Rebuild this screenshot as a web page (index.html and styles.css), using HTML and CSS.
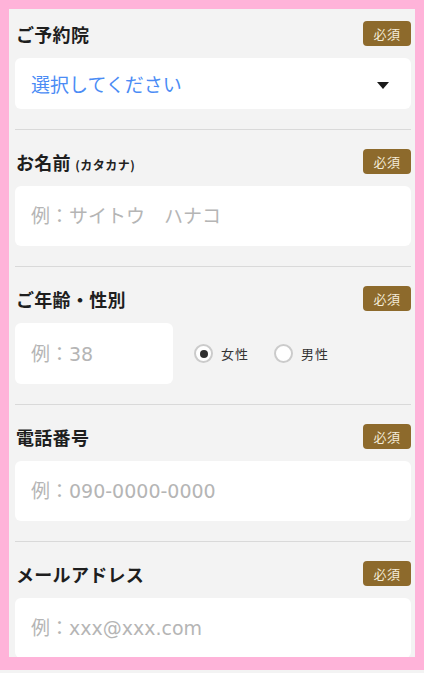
FILE: index.html
```html
<!DOCTYPE html>
<html lang="ja">
<head>
<meta charset="utf-8">
<title>予約フォーム</title>
<link rel="stylesheet" href="styles.css">
</head>
<body>
<div class="frame">
  <form class="panel">
    <section class="field first">
      <div class="field-head">
        <span class="label">ご予約院</span>
        <span class="badge">必須</span>
      </div>
      <div class="select">
        <span class="select-text">選択してください</span>
        <span class="caret"></span>
      </div>
    </section>

    <section class="field">
      <div class="field-head">
        <span class="label">お名前 <small class="sub">(カタカナ)</small></span>
        <span class="badge">必須</span>
      </div>
      <input class="text-input" type="text" placeholder="例：サイトウ　ハナコ">
    </section>

    <section class="field">
      <div class="field-head">
        <span class="label">ご年齢・性別</span>
        <span class="badge">必須</span>
      </div>
      <div class="age-row">
        <input class="text-input age" type="text" placeholder="例：38">
        <div class="radios">
          <label class="radio"><span class="circle checked"></span><span class="radio-text">女性</span></label>
          <label class="radio"><span class="circle"></span><span class="radio-text">男性</span></label>
        </div>
      </div>
    </section>

    <section class="field">
      <div class="field-head">
        <span class="label">電話番号</span>
        <span class="badge">必須</span>
      </div>
      <input class="text-input" type="text" placeholder="例：090-0000-0000">
    </section>

    <section class="field">
      <div class="field-head">
        <span class="label">メールアドレス</span>
        <span class="badge">必須</span>
      </div>
      <input class="text-input" type="text" placeholder="例：xxx@xxx.com">
    </section>
  </form>
</div>
</body>
</html>
```

FILE: styles.css
```css
html {
  background: #f3f3f3;
}
body {
  margin: 0;
  font-family: "Noto Sans CJK JP", "Noto Sans", sans-serif;
}
.frame {
  height: 670px;
  box-sizing: border-box;
  background: #ffb3d9;
  padding: 9px 9px 13px 9px;
}
.panel {
  height: 648px;
  overflow: hidden;
  background: #f3f3f3;
  padding: 0 4px 0 6px;
  box-sizing: border-box;
  margin: 0;
}
.field {
  padding: 19px 0 20px;
  border-bottom: 1px solid #d9d9d9;
}
.field.first {
  padding-top: 12px;
}
.field-head {
  display: flex;
  justify-content: space-between;
  align-items: center;
  height: 25px;
  margin-bottom: 12px;
}
.label {
  font-size: 18px;
  font-weight: 700;
  color: #1e1e1e;
  padding-left: 1px;
  letter-spacing: 0.3px;
}
.sub {
  font-size: 12px;
  font-weight: 700;
  color: #222;
  letter-spacing: 0.5px;
}
.badge {
  width: 48px;
  height: 25px;
  border-radius: 4px;
  background: #8d6a2c;
  color: #f4ecd9;
  font-size: 13px;
  display: flex;
  align-items: center;
  justify-content: center;
  letter-spacing: 0.5px;
}
.select {
  height: 51px;
  background: #fff;
  border-radius: 6px;
  display: flex;
  align-items: center;
  justify-content: space-between;
  padding: 0 22px 0 16px;
}
.select-text {
  font-size: 19px;
  color: #4b8cf5;
}
.caret {
  width: 0;
  height: 0;
  border-left: 6px solid transparent;
  border-right: 6px solid transparent;
  border-top: 7px solid #1a1a1a;
  margin-top: 3px;
}
.text-input {
  display: block;
  width: 100%;
  height: 60px;
  box-sizing: border-box;
  border: none;
  border-radius: 6px;
  background: #fff;
  padding: 0 16px;
  font-family: "DejaVu Sans", "Noto Sans CJK JP", sans-serif;
  font-size: 19px;
  color: #333;
  outline: none;
}
.text-input::placeholder {
  color: #b5b5b5;
}
.age-row {
  display: flex;
  align-items: center;
  gap: 21px;
}
.text-input.age {
  width: 158px;
  height: 61px;
}
.radios {
  display: flex;
  align-items: center;
  gap: 25px;
}
.radio {
  display: flex;
  align-items: center;
  gap: 8px;
}
.circle {
  width: 19px;
  height: 19px;
  box-sizing: border-box;
  border: 2px solid #cbcbcb;
  border-radius: 50%;
  background: #fff;
  display: flex;
  align-items: center;
  justify-content: center;
}
.circle.checked::after {
  content: "";
  width: 8px;
  height: 8px;
  border-radius: 50%;
  background: #2f2f2f;
}
.radio-text {
  font-size: 13px;
  color: #333;
  letter-spacing: 1px;
}
```
